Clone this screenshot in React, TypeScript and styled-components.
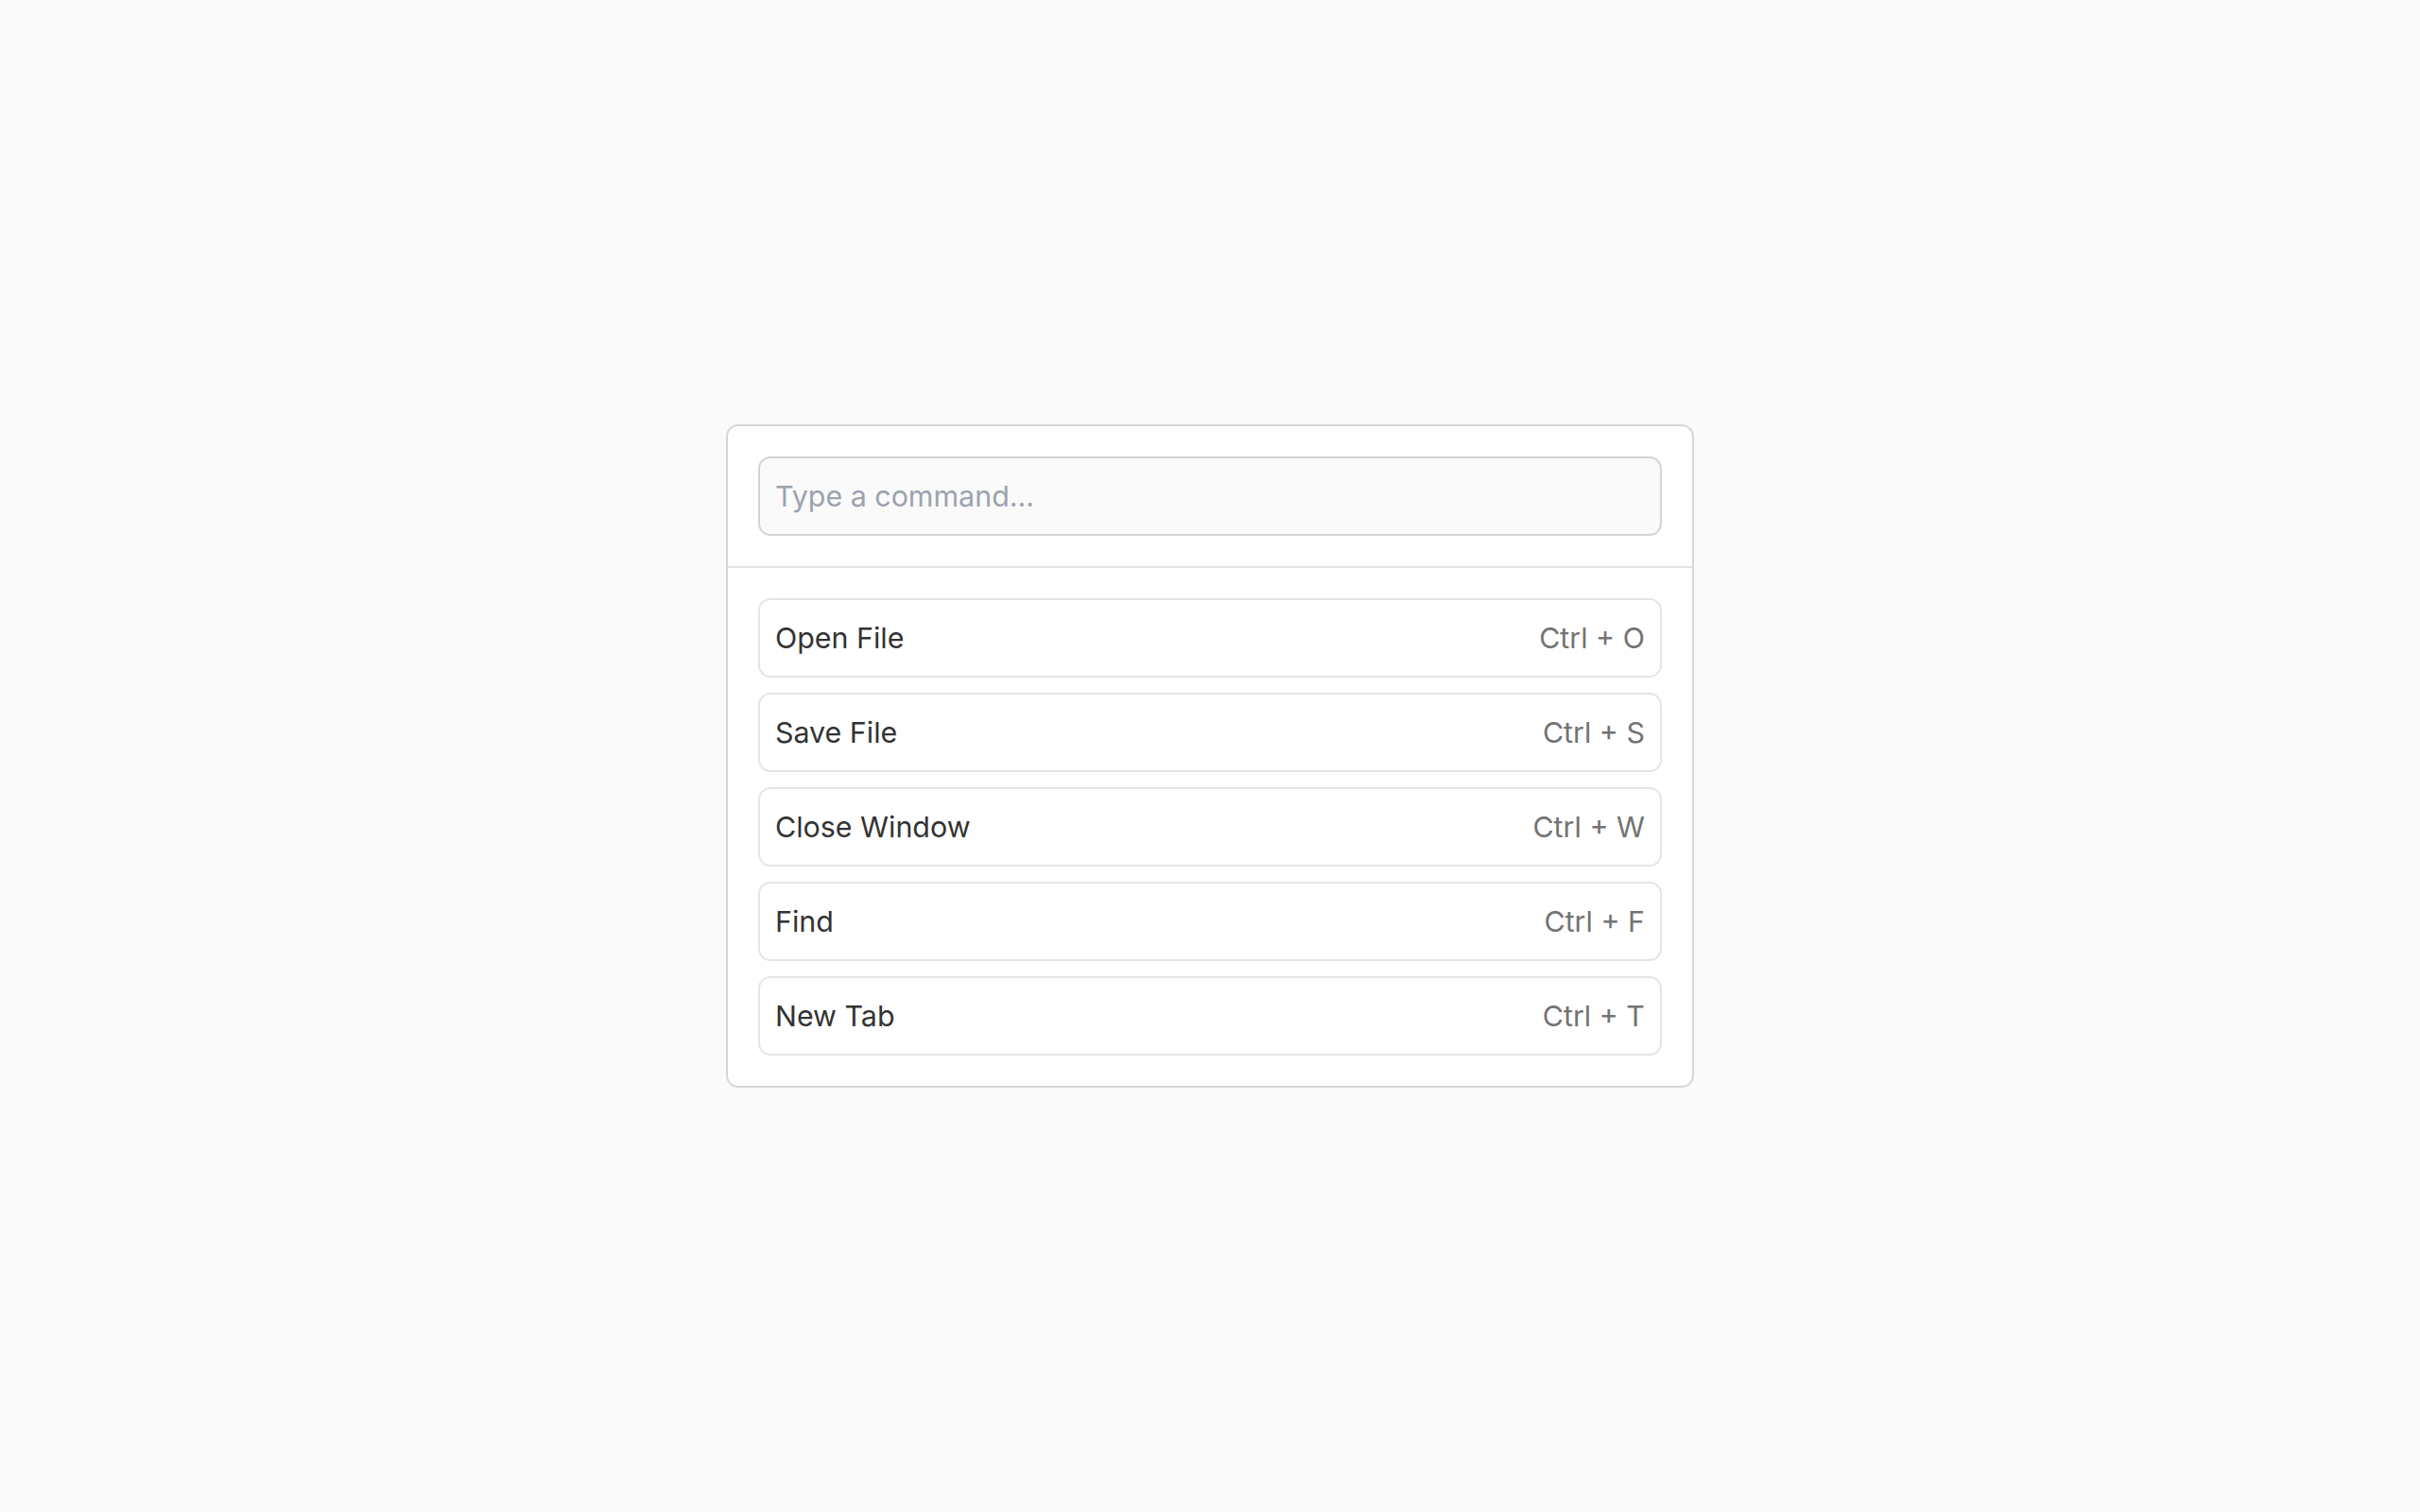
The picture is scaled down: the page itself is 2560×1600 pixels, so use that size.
import React, { useState } from "react";
import styled, { createGlobalStyle } from "styled-components";

const GlobalStyle = createGlobalStyle`
  html, body {
    margin: 0;
    padding: 0;
    background-color: #fafafa;
    font-family: Inter, "Noto Sans", "Liberation Sans", sans-serif;
  }
  * {
    box-sizing: border-box;
  }
`;

const Page = styled.div`
  min-height: 100vh;
  display: flex;
  align-items: center;
  justify-content: center;
`;

const Palette = styled.div`
  width: 1024px;
  background-color: #ffffff;
  border: 2px solid #d6d6d6;
  border-radius: 13px;
`;

const SearchArea = styled.div`
  padding: 32px;
  border-bottom: 2px solid #e5e5e5;
`;

const SearchInput = styled.input`
  display: block;
  width: 100%;
  height: 84px;
  padding: 0 16px;
  background-color: #fafafa;
  border: 2px solid #d4d4d4;
  border-radius: 13px;
  font-family: inherit;
  font-size: 30.4px;
  color: #333333;

  &::placeholder {
    color: #9ca3af;
  }

  &:focus {
    outline: none;
    border-color: #3b82f6;
  }
`;

const CommandList = styled.ul`
  list-style: none;
  margin: 0;
  padding: 32px;
  display: flex;
  flex-direction: column;
  gap: 16px;
`;

const CommandItem = styled.li`
  height: 84px;
  padding: 0 16px;
  display: flex;
  align-items: center;
  justify-content: space-between;
  border: 2px solid #e5e5e5;
  border-radius: 13px;
  background-color: #ffffff;
  cursor: pointer;

  &:hover {
    background-color: #f5f5f5;
  }
`;

const CommandName = styled.span`
  font-size: 30.4px;
  color: #333333;
`;

const Shortcut = styled.span`
  font-size: 30.4px;
  color: #737373;
`;

const commands = [
  { name: "Open File", shortcut: "Ctrl + O" },
  { name: "Save File", shortcut: "Ctrl + S" },
  { name: "Close Window", shortcut: "Ctrl + W" },
  { name: "Find", shortcut: "Ctrl + F" },
  { name: "New Tab", shortcut: "Ctrl + T" },
];

export default function App() {
  const [query, setQuery] = useState("");

  const filtered = commands.filter((c) =>
    c.name.toLowerCase().includes(query.toLowerCase())
  );

  return (
    <>
      <GlobalStyle />
      <Page>
        <Palette>
          <SearchArea>
            <SearchInput
              type="text"
              placeholder="Type a command..."
              value={query}
              onChange={(e) => setQuery(e.target.value)}
            />
          </SearchArea>
          <CommandList>
            {filtered.map((c) => (
              <CommandItem key={c.name}>
                <CommandName>{c.name}</CommandName>
                <Shortcut>{c.shortcut}</Shortcut>
              </CommandItem>
            ))}
          </CommandList>
        </Palette>
      </Page>
    </>
  );
}
